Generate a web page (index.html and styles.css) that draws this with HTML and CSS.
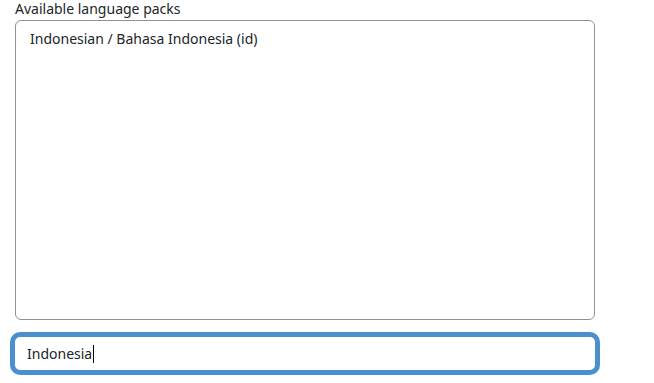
FILE: index.html
```html
<!DOCTYPE html>
<html lang="en">
<head>
  <meta charset="UTF-8" />
  <meta name="viewport" content="width=device-width, initial-scale=1.0"/>
  <title>Language packs</title>
  <link rel="stylesheet" href="styles.css">
</head>
<body>

  <div class="form-group">
    <label class="pack-label" for="packs">Available language packs</label>
    <div class="pack-list" id="packs">
      <div class="pack-option">Indonesian / Bahasa Indonesia (id)</div>
    </div>
    <div class="search-box">
      <span class="search-text">Indonesia</span><span class="caret"></span>
    </div>
  </div>

</body>
</html>
```

FILE: styles.css
```css
body {
  margin: 0;
  font-family: 'Noto Sans', 'Open Sans', sans-serif;
  font-size: 14px;
  color: #212529;
  background: #fff;
}
.form-group {
  padding: 0 0 0 15px;
  width: 580px;
}
.pack-label {
  display: block;
  line-height: 18px;
  height: 18px;
  padding-top: 0;
}
.pack-list {
  box-sizing: border-box;
  height: 300px;
  margin-top: 2px;
  border: 1px solid #8f8f9d;
  border-radius: 6px;
  padding: 8px 14px;
}
.pack-option {
  line-height: 20px;
}
.search-box {
  box-sizing: border-box;
  margin: 12px 0 0 -5px;
  width: 590px;
  height: 43px;
  border: 5px solid #4a8fd0;
  border-radius: 10px;
  padding: 0 12px;
  display: flex;
  align-items: center;
}
.caret {
  display: inline-block;
  width: 1px;
  height: 18px;
  background: #000;
  margin-left: 1px;
}
```
